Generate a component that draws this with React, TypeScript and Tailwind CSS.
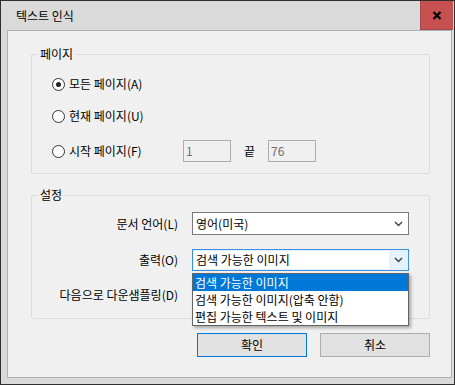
function Radio({ checked }: { checked?: boolean }) {
  return (
    <span className="w-[13px] h-[13px] rounded-full border border-[#333] bg-white flex items-center justify-center shrink-0">
      {checked && <span className="w-[5px] h-[5px] rounded-full bg-[#222]" />}
    </span>
  );
}

function Chevron() {
  return (
    <svg width="9" height="6" viewBox="0 0 9 6" className="shrink-0">
      <path d="M1 1 L4.5 4.5 L8 1" fill="none" stroke="#444" strokeWidth="1.5" />
    </svg>
  );
}

function Group({ title, className, children }: { title: string; className: string; children: React.ReactNode }) {
  return (
    <div className={`relative ml-[23px] w-[399px] border border-[#dcdcdc] rounded-[2px] ${className}`}>
      <span className="absolute -top-[9px] left-[6px] bg-[#f0f0f0] px-[2px] leading-[16px]">{title}</span>
      {children}
    </div>
  );
}

export default function App() {
  return (
    <div className="w-[455px] h-[385px] border border-[#2f2f2f] bg-[#dadada] flex flex-col text-[12px] text-black font-['Noto_Sans_CJK_KR','Liberation_Sans',sans-serif]">
      <div className="h-[29px] flex items-center shrink-0">
        <span className="pl-[15px] flex-1">텍스트 인식</span>
        <div className="w-[33px] h-[29px] mr-[1px] bg-[#c75050] border-l border-b border-[#a04a4a] flex items-center justify-center">
          <svg width="10" height="9" viewBox="0 0 10 9">
            <path d="M1.5 1 L8.5 8 M8.5 1 L1.5 8" stroke="#000" strokeWidth="2.2" />
          </svg>
        </div>
      </div>

      <div className="flex-1 ml-[6px] mr-[2px] mb-[6px] border border-[#aab1bd] bg-[#f0f0f0] flex flex-col">
        <Group title="페이지" className="mt-[23px] h-[120px] pt-[19px] pl-[20px]">
          <div className="h-[20px] flex items-center gap-[4px]">
            <Radio checked />
            <span>모든 페이지(A)</span>
          </div>
          <div className="h-[20px] mt-[12px] flex items-center gap-[4px]">
            <Radio />
            <span>현재 페이지(U)</span>
          </div>
          <div className="h-[22px] mt-[14px] flex items-center">
            <div className="w-[131px] flex items-center gap-[4px]">
              <Radio />
              <span>시작 페이지(F)</span>
            </div>
            <div className="w-[48px] h-[22px] border border-[#adadad] bg-[#f0f0f0] text-[#6d6d6d] pl-[2px] leading-[20px]">1</div>
            <span className="ml-[13px] w-[24px]">끝</span>
            <div className="w-[48px] h-[22px] border border-[#adadad] bg-[#f0f0f0] text-[#6d6d6d] pl-[2px] leading-[20px]">76</div>
          </div>
        </Group>

        <Group title="설정" className="mt-[21px] h-[124px] pt-[16px]">
          <div className="h-[23px] flex items-center">
            <span className="w-[146px] text-right">문서 언어(L)</span>
            <div className="ml-[14px] w-[217px] h-[23px] border border-[#7a7a7a] bg-white flex items-center pl-[3px] pr-[5px]">
              <span className="flex-1">영어(미국)</span>
              <Chevron />
            </div>
          </div>
          <div className="h-[22px] mt-[14px] flex items-center">
            <span className="w-[146px] text-right">출력(O)</span>
            <div className="relative ml-[14px] w-[217px] h-[22px]">
              <div className="h-full border border-[#3d8ee0] bg-[#e5f1fb] flex items-center pl-[1px] pr-[5px]">
                <span className="w-[195px] h-[18px] bg-white pl-[2px] leading-[18px]">검색 가능한 이미지</span>
                <span className="flex-1" />
                <Chevron />
              </div>
              <div className="absolute left-0 top-[24px] w-[217px] border border-[#646464] bg-white shadow-[2px_2px_3px_rgba(0,0,0,0.3)] z-10 leading-[17px]">
                <div className="h-[17px] bg-[#0078d7] text-white pl-[2px]">검색 가능한 이미지</div>
                <div className="h-[17px] pl-[2px]">검색 가능한 이미지(압축 안함)</div>
                <div className="h-[17px] pl-[2px]">편집 가능한 텍스트 및 이미지</div>
              </div>
            </div>
          </div>
          <div className="h-[22px] mt-[13px] flex items-center">
            <span className="w-[146px] text-right">다음으로 다운샘플링(D)</span>
            <div className="ml-[14px] w-[217px] h-[22px] border border-[#7a7a7a] bg-white" />
          </div>
        </Group>

        <div className="ml-[23px] w-[399px] mt-[14px] flex justify-end gap-[13px]">
          <button className="w-[110px] h-[24px] border border-[#0078d7] bg-[#e1e1e1]">확인</button>
          <button className="w-[110px] h-[24px] border border-[#adadad] bg-[#e1e1e1]">취소</button>
        </div>
      </div>
    </div>
  );
}
